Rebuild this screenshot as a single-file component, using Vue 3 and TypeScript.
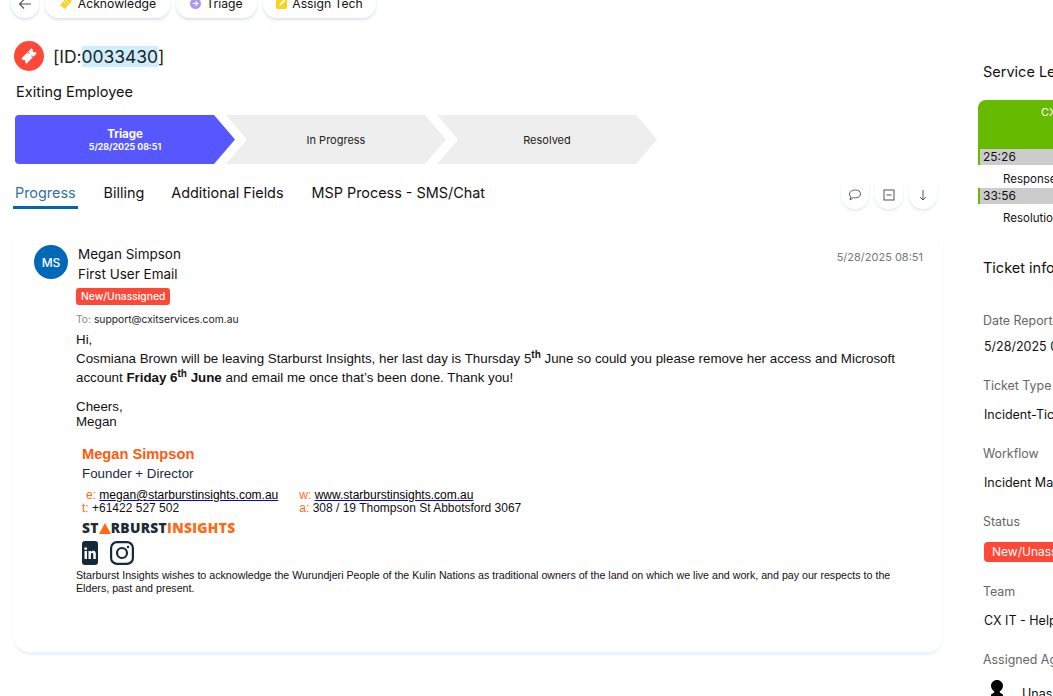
<script setup lang="ts">
const stages = [
  { name: 'Triage', date: '5/28/2025 08:51', active: true },
  { name: 'In Progress', date: '', active: false },
  { name: 'Resolved', date: '', active: false },
]
const tabs = ['Progress', 'Billing', 'Additional Fields', 'MSP Process - SMS/Chat']
const info = [
  { label: 'Date Reported', value: '5/28/2025 08:51', cls: 'first' },
  { label: 'Ticket Type', value: 'Incident-Ticket', cls: '' },
  { label: 'Workflow', value: 'Incident Management', cls: '' },
]
</script>

<template>
  <div class="page">
    <main class="left">
      <div class="actions">
        <button class="pill round">
          <svg width="14" height="14" viewBox="0 0 14 14" fill="none" stroke="#555" stroke-width="1.1"><path d="M13 7H1.500M6 2.500 1.500 7 6 11.500" /></svg>
        </button>
        <button class="pill act">
          <svg width="14" height="14" viewBox="0 0 14 14"><path d="M8.500 1 13 5 6 13 1 9Z" fill="#ffd21f" /><path d="M5 6l3 3M7 4.500l3 3" stroke="#fff" stroke-width="1" /></svg>
          Acknowledge
        </button>
        <button class="pill act">
          <svg width="11" height="11" viewBox="0 0 12 12"><circle cx="6" cy="6" r="6" fill="#a79bf0" /><path d="M3 6h5M6 3.600 8.400 6 6 8.400" stroke="#fff" stroke-width="1.300" fill="none" /></svg>
          Triage
        </button>
        <button class="pill act">
          <svg width="11" height="12" viewBox="0 0 11 12"><rect width="11" height="12" rx="1.500" fill="#ffd21f" /><path d="M3 9l1-2.500L8 2.500l1.300 1.300-4 4Z" fill="#fff" /></svg>
          Assign Tech
        </button>
      </div>

      <div class="title">
        <span class="ticket-icon">
          <svg width="16" height="16" viewBox="0 0 20 20"><g transform="rotate(-45 10 10)"><path d="M1 5.500h18v2.800a1.700 1.700 0 0 0 0 3.400v2.800H1v-2.800a1.700 1.700 0 0 0 0-3.400Z" fill="#fff" /><path d="M12.500 5.500v2.700M12.500 11.800v2.700" stroke="#ff4838" stroke-width="1.300" /></g></svg>
        </span>
        <h1>[ID:<span class="selected">0033430</span>]</h1>
      </div>
      <div class="subject">Exiting Employee</div>

      <div class="stages">
        <div v-for="s in stages" :key="s.name" class="stage" :class="{ active: s.active }">
          <b v-if="s.active">{{ s.name }}</b>
          <span v-else>{{ s.name }}</span>
          <small v-if="s.date">{{ s.date }}</small>
        </div>
      </div>

      <div class="tabs-row">
        <nav class="tabs">
          <span v-for="(t, i) in tabs" :key="t" class="tab" :class="{ on: i === 0 }">{{ t }}</span>
        </nav>
        <div class="tools">
          <button class="pill round small">
            <svg width="14" height="14" viewBox="0 0 14 14" fill="none" stroke="#555" stroke-width="1"><path d="M7.500 2c3 0 5 1.500 5 3.900s-2 3.900-5 3.900c-.7 0-1.300 0-2-.3L2 12l.9-2.900C2 8.300 1.500 7.300 1.500 5.900 1.500 3.500 4.500 2 7.500 2Z" /></svg>
          </button>
          <button class="pill round small">
            <svg width="14" height="14" viewBox="0 0 14 14" fill="none" stroke="#555" stroke-width="1"><rect x="2" y="2" width="10" height="10" /><path d="M4.500 7h5" /></svg>
          </button>
          <button class="pill round small">
            <svg width="14" height="14" viewBox="0 0 14 14" fill="none" stroke="#555" stroke-width="1"><path d="M7 2v10M4 9l3 3 3-3" /></svg>
          </button>
        </div>
      </div>

      <article class="card">
        <header class="msg-head">
          <div class="avatar">MS</div>
          <div class="who">
            <div class="name">Megan Simpson</div>
            <div class="kind">First User Email</div>
          </div>
          <time class="stamp">5/28/2025 08:51</time>
        </header>
        <span class="badge">New/Unassigned</span>
        <div class="to"><em>To:</em> support@cxitservices.com.au</div>

        <div class="mail">
          <p>Hi,<br />Cosmiana Brown will be leaving Starburst Insights, her last day is Thursday 5<sup>th</sup> June so could you please remove her access and Microsoft account <b>Friday 6<sup>th</sup> June</b> and email me once that’s been done. Thank you!</p>
          <p class="cheers">Cheers,<br />Megan</p>

          <div class="sig">
            <div class="sig-name">Megan Simpson</div>
            <div class="sig-role">Founder + Director</div>
            <div class="sig-contact">
              <div class="c1">
                <div class="indent"><i>e:</i> <a>megan@starburstinsights.com.au</a></div>
                <div><i>t:</i> +61422 527 502</div>
              </div>
              <div class="c2">
                <div><i>w:</i> <a>www.starburstinsights.com.au</a></div>
                <div><i>a:</i> 308 / 19 Thompson St Abbotsford 3067</div>
              </div>
            </div>
            <div class="logo">ST<svg width="12" height="11" viewBox="0 0 12 11"><path d="M6 0 12 11H0Z" fill="#ff6a13" /></svg>RBURST<span>INSIGHTS</span></div>
            <div class="social">
              <svg width="16" height="24" viewBox="0 0 16 24"><rect width="16" height="24" rx="3" fill="#16293a" /><path d="M2.500 10h2.500v8H2.500ZM6.500 10h2.400v1.200c.6-1 1.400-1.400 2.400-1.400 1.700 0 2.500 1.100 2.500 3V18h-2.500v-4.600c0-1-.4-1.500-1.100-1.500-.8 0-1.300.6-1.300 1.600V18H6.500Z" fill="#fff" /><circle cx="3.700" cy="7.700" r="1.400" fill="#fff" /></svg>
              <svg width="24" height="24" viewBox="0 0 24 24" fill="none" stroke="#16293a" stroke-width="2.200"><rect x="1.100" y="1.100" width="21.800" height="21.800" rx="6" /><circle cx="12" cy="12" r="5" /><circle cx="18" cy="6" r="1.200" fill="#16293a" stroke="none" /></svg>
            </div>
          </div>
          <p class="ack">Starburst Insights wishes to acknowledge the Wurundjeri People of the Kulin Nations as traditional owners of the land on which we live and work, and pay our respects to the Elders, past and present.</p>
        </div>
      </article>
    </main>

    <aside class="right">
      <h2 class="sl-title">Service Level</h2>
      <div class="sl-card">CX IT - SLA</div>
      <div class="sl-bar">25:26</div>
      <div class="sl-label resp">Response</div>
      <div class="sl-bar">33:56</div>
      <div class="sl-label res">Resolution</div>

      <h2 class="ti-title">Ticket information</h2>

      <section v-for="f in info" :key="f.label" class="field" :class="f.cls">
        <label>{{ f.label }}</label>
        <div>{{ f.value }}</div>
      </section>
      <section class="field status">
        <label>Status</label>
        <span class="status-badge">New/Unassigned</span>
      </section>
      <section class="field team">
        <label>Team</label>
        <div>CX IT - Helpdesk</div>
      </section>
      <section class="field agent">
        <label>Assigned Agent</label>
        <div class="agent-row">
          <svg width="16" height="20" viewBox="0 0 16 20"><path d="M8 0c3.300 0 6 2.500 6 5.800 0 2.600-1.700 4.700-3.400 5.800.2 1.300 1.400 2 3.400 3v5.400H2V14.600c2-1 3.200-1.700 3.400-3C3.700 10.500 2 8.400 2 5.800 2 2.500 4.700 0 8 0Z" fill="#000" /></svg>
          <span>Unassigned</span>
        </div>
      </section>
    </aside>
  </div>
</template>

<style>
html, body { margin: 0; background: #fff; overflow: hidden; }
</style>

<style scoped>
.page {
  width: 1053px;
  height: 696px;
  overflow: hidden;
  display: flex;
  font-family: Inter, "Noto Sans", sans-serif;
  color: #111;
  background: #fff;
}
button { font: inherit; color: inherit; background: #fff; border: 0; padding: 0; }
.left { width: 943px; flex: none; padding-left: 14px; box-sizing: border-box; }
.actions { display: flex; gap: 6px; margin: -10px 0 0 -3px; height: 28px; }
.pill {
  height: 28px;
  border-radius: 14px;
  display: inline-flex;
  align-items: center;
  justify-content: center;
  box-shadow: 0 2px 3px rgba(120, 170, 210, .3);
}
.round { width: 28px; }
.actions .act { gap: 5px; font-size: 12.200px; white-space: nowrap; padding-bottom: 2px; box-sizing: border-box; }
.actions .act:nth-child(2) { width: 125px; }
.actions .act:nth-child(3) { width: 81px; }
.actions .act:nth-child(4) { width: 113px; }

.title { display: flex; align-items: center; gap: 9px; margin-top: 23px; height: 30px; }
.ticket-icon {
  width: 30px; height: 30px; border-radius: 50%; background: #ff4838;
  display: flex; align-items: center; justify-content: center;
}
h1 { margin: 2px 0 0; font-size: 17.500px; line-height: 20px; font-weight: 400; color: #222; letter-spacing: -.06px; }
.selected { background: #cdeeff; }
.subject { margin: 11px 0 0 2px; font-size: 14.500px; line-height: 20px; }

.stages { display: flex; margin-top: 13px; height: 49px; padding-left: 1px; }
.stage {
  width: 220px;
  height: 49px;
  margin-right: -9px;
  background: #eeeeee;
  clip-path: polygon(0 0, calc(100% - 21px) 0, 100% 50%, calc(100% - 21px) 100%, 0 100%, 21px 50%);
  display: flex;
  flex-direction: column;
  align-items: center;
  justify-content: center;
  font-size: 11px;
  color: #222;
}
.stage.active {
  background: #5757ff;
  color: #fff;
  border-radius: 4px 0 0 4px;
  box-sizing: border-box;
  padding-top: 2px;
  clip-path: polygon(0 0, calc(100% - 21px) 0, 100% 50%, calc(100% - 21px) 100%, 0 100%);
}
.stage b { font-size: 11.500px; line-height: 13px; font-weight: 700; }
.stage small { font-size: 8.800px; line-height: 12px; font-weight: 700; }

.tabs-row { display: flex; justify-content: space-between; height: 36px; margin-top: 13px; padding-right: 6px; }
.tabs { display: flex; gap: 23px; }
.tab { font-size: 14.400px; line-height: 20px; height: 32px; padding: 6px 2px 0; box-sizing: border-box; white-space: nowrap; }
.tab.on { color: #2e72a8; border-bottom: 3px solid #0068b0; margin-left: -1px; margin-right: 1px; }
.tab:last-child { margin-left: 1px; }
.tools { display: flex; gap: 6px; padding-top: 6px; }
.small { width: 28px; height: 26px; padding-bottom: 2px; box-sizing: border-box; border-radius: 0 0 14px 14px; box-shadow: 0 2px 3px rgba(120, 170, 210, .22); }

.card {
  margin-top: 15px;
  height: 426px;
  box-sizing: border-box;
  padding: 17px 20px 0;
  border-radius: 16px;
  box-shadow: 0 1px 2px rgba(200, 225, 250, .4);
  border-bottom: 2px solid #edf2fd;
}
.msg-head { display: flex; align-items: flex-start; }
.avatar {
  width: 34px; height: 34px; border-radius: 50%;
  background: #0068b8; color: #fff; font-size: 12px; font-weight: 500;
  display: flex; align-items: center; justify-content: center; flex: none; margin-right: 10px;
}
.who { flex: 1; font-size: 13.500px; line-height: 20px; margin-top: -1px; }
.stamp { font-size: 11px; color: #777; margin: 5px 0 0; }
.badge {
  display: inline-block;
  margin: -3px 0 0 42px;
  background: #ff4838; color: #fff; font-size: 10.300px; font-weight: 500;
  line-height: 17px; padding: 0 5px; border-radius: 3px;
}
.to { margin: 6px 0 0 42px; font-size: 10.300px; line-height: 16px; color: #222; }
.to em { font-style: normal; color: #888; }

.mail { margin: 3px 0 0 42px; font-family: "Liberation Sans", Arial, sans-serif; font-size: 13.330px; line-height: 19px; color: #111; width: 824px; }
.mail p { margin: 0; }
.mail sup { font-size: 10px; line-height: 0; font-weight: 700; }
.cheers { margin-top: 12px !important; line-height: 15px; }
.sig { margin: 15px 0 0 6px; }
.sig-name { font-size: 14.670px; font-weight: 700; color: #ff5a0e; line-height: 20px; }
.sig-role { font-size: 13.330px; color: #1a2a3a; line-height: 19px; }
.sig-contact { display: flex; gap: 21px; font-size: 12px; line-height: 13px; margin-top: 6px; }
.indent { padding-left: 4px; }
.sig i { font-style: normal; color: #ff6a13; }
.sig a { color: #000; text-decoration: underline; text-decoration-color: #00f; }
.logo {
  font-family: "Open Sans", "Liberation Sans", sans-serif;
  font-weight: 800; font-size: 13.800px; line-height: 16px; margin-top: 5px; color: #1e2a36; letter-spacing: .3px;
  display: flex; align-items: center;
}
.logo span { color: #ff6a13; }
.social { display: flex; gap: 12px; margin-top: 5px; height: 24px; }
.ack { font-size: 10.670px; line-height: 13px; margin: 4px 0 0 !important; width: 824px; }

.right { flex: 1; min-width: 0; padding: 0 0 0 35px; overflow: hidden; white-space: nowrap; font-size: 13px; }
.sl-title { margin: 62px 0 0 5px; font-size: 14.500px; font-weight: 400; line-height: 20px; }
.sl-card {
  margin-top: 18px; height: 49px; width: 200px; background: #66bb00; color: #fff;
  border-radius: 8px 0 0 0; box-sizing: border-box; padding: 5px 0 0 63px; font-size: 11px;
}
.sl-bar { height: 16px; width: 200px; background: #cccccc; border-left: 2px solid #66bb00; box-sizing: border-box; padding-left: 3px; font-size: 12px; line-height: 16px; }
.sl-label { font-size: 11.500px; line-height: 14px; margin-left: 25px; }
.resp { margin-top: 7px; margin-bottom: 2px; }
.res { margin-top: 7px; }
.ti-title { margin: 32px 0 0 5px; font-size: 14.500px; font-weight: 400; line-height: 22px; }
.field { margin-left: 5px; }
.field label { display: block; color: #666; font-size: 12.400px; line-height: 16px; }
.field div { font-size: 12.500px; line-height: 16px; margin-top: 13px; color: #111; }
.field div:not(.agent-row) { margin-left: 1px; }
.field + .field { margin-top: 23px; }
.first { margin-top: 34px; }
.first div { margin-top: 10px; }
.status-badge { display: block; width: 200px; background: #ff4838; color: #fff; font-size: 12px; line-height: 20px; padding: 0 8px; border-radius: 4px; margin: 12px 0 0 1px; }
.field.team { margin-top: 22px; }
.field .agent-row { display: flex; gap: 17px; align-items: flex-start; margin-top: 12px; padding-left: 6px; }
.agent-row svg { flex: none; }
.agent-row span { padding-top: 6px; }
</style>
